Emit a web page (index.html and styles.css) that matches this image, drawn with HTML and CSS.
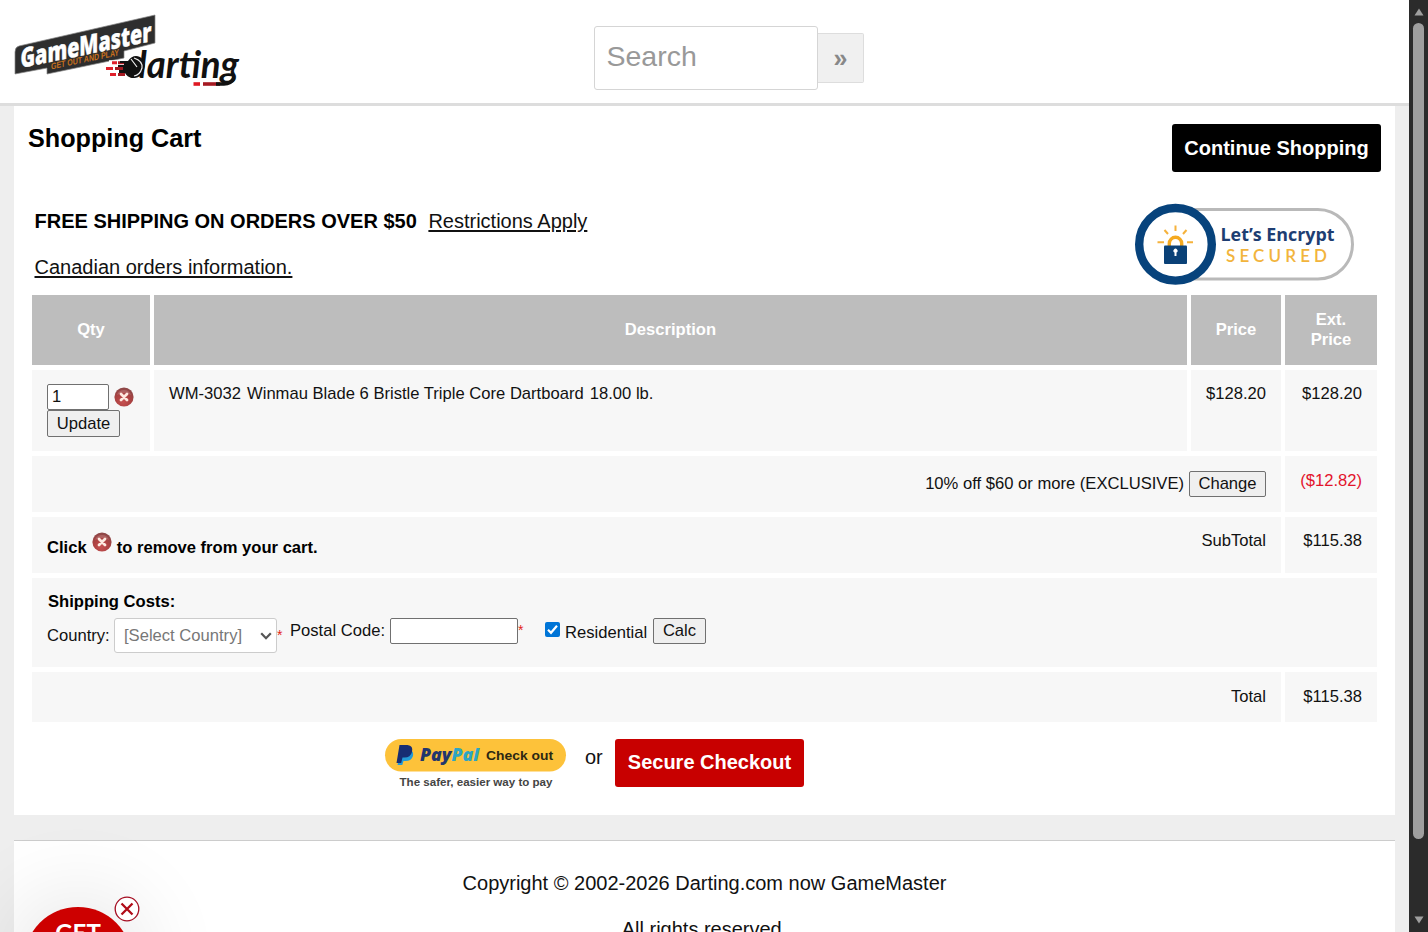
FILE: index.html
```html
<!DOCTYPE html>
<html lang="en">
<head>
<meta charset="utf-8">
<title>Shopping Cart</title>
<link rel="stylesheet" href="styles.css">
</head>
<body>
<svg class="defs" width="0" height="0" aria-hidden="true">
  <defs>
    <radialGradient id="ball" cx="45%" cy="75%" r="70%"><stop offset="0" stop-color="#c65050"/><stop offset=".6" stop-color="#ab4141"/><stop offset="1" stop-color="#8e4848"/></radialGradient>
    <symbol id="remove" viewBox="0 0 20 20">
      <circle cx="10" cy="10" r="9.6" fill="url(#ball)"/>
      <path d="M3 8a7.4 7.4 0 0 1 14 0Q10 4 3 8Z" fill="#fff" opacity=".16"/>
      <path d="M7 7l6 6M13 7l-6 6" stroke="#fde9e0" stroke-width="2.8" stroke-linecap="round"/>
    </symbol>
  </defs>
</svg>
<div class="page">
  <header class="header">
    <svg class="logo" width="232" height="80" viewBox="10 10 232 80">
      <path d="M15 52Q15 47 19 46L155 15V43L124 51V58L47 74V68L15 74Z" fill="#2e2e2e" stroke="#888" stroke-width=".7"/>
      <g transform="matrix(1 -.205 0 1 20.500 68)"><text class="logo-name" textLength="131" lengthAdjust="spacingAndGlyphs">GameMaster</text></g>
      <g transform="matrix(1 -.21 0 1 51 69.500)"><text class="logo-tag" textLength="68" lengthAdjust="spacingAndGlyphs">GET OUT AND PLAY</text></g>
      <path d="M109 62.800H128M106 68.600H128M110 74.400H128" stroke="#fff" stroke-width="5"/>
      <path d="M112 62.800H117M106 68.600H113M110 74.400H116" stroke="#e0202b" stroke-width="3"/>
      <path d="M118 62.800H125M115 68.600H123M118 74.400H125" stroke="#a51a22" stroke-width="3"/>
      <text class="logo-darting" x="127" y="77.500" textLength="112" lengthAdjust="spacingAndGlyphs">darting</text>
      <path d="M120 61H128Q133 54 140 57Q147 61 144 70Q141 79 132 78Q127 77 125 73H119V70H123V67H118V65H124V63H120Z" fill="#111"/>
      <path d="M134 58Q143 61 142 68Q140 75 134 76M137 67L131 59" fill="none" stroke="#eee" stroke-width="1.200"/>
      <path d="M193.500 84H200" stroke="#df1822" stroke-width="3.600"/>
      <path d="M203 84H220" stroke="#a51a22" stroke-width="3.600"/>
      <path d="M216 84H224Q231 84 234 78" fill="none" stroke="#111" stroke-width="3.600"/>
    </svg>
    <form class="search">
      <input class="search-input" type="text" placeholder="Search" aria-label="Search">
      <button class="search-go" type="button">»</button>
    </form>
  </header>

  <main class="cart">
    <div class="title-row">
      <h1 class="title">Shopping Cart</h1>
      <button class="btn btn-continue" type="button">Continue Shopping</button>
    </div>
    <div class="notice-row">
      <div class="notices">
        <p class="notice"><b>FREE SHIPPING ON ORDERS OVER $50</b> <a class="link link-restrict">Restrictions Apply</a></p>
        <p class="notice"><a class="link">Canadian orders information.</a></p>
      </div>
      <svg class="badge" width="222" height="84" viewBox="1133 202 222 84">
        <rect x="1150" y="209.500" width="202.500" height="69.500" rx="34.700" fill="#fff" stroke="#b9b9b9" stroke-width="3"/>
        <circle cx="1175.500" cy="244.300" r="36.300" fill="#fff" stroke="#07437c" stroke-width="8.400"/>
        <path d="M1175.500 225.500V231M1164.500 230L1168 234M1186.500 230L1183 234M1157.500 242.300H1164M1187 242.300H1193" stroke="#f5b23c" stroke-width="2"/>
        <path d="M1169.300 248V243.500a6.200 6.200 0 0 1 12.400 0V248" fill="none" stroke="#f5a91f" stroke-width="3.400"/>
        <rect x="1164" y="245.500" width="23" height="18.500" rx="1" fill="#0a4177"/>
        <path d="M1174.500 256V252.500a2 2 0 1 1 2 0V256Z" fill="#fff"/>
        <text class="badge-main" x="1220.500" y="241" textLength="114" lengthAdjust="spacingAndGlyphs">Let’s Encrypt</text>
        <text class="badge-sub" x="1226" y="261.500" textLength="101">SECURED</text>
      </svg>
    </div>

    <div class="grid">
      <div class="th">Qty</div><div class="th">Description</div><div class="th">Price</div><div class="th">Ext.<br>Price</div>

      <div class="cell qty">
        <div class="qty-line"><input class="field qty-input" value="1" aria-label="Quantity"><svg class="x-icon" width="20" height="20"><use href="#remove"/></svg></div>
        <button class="small-btn update" type="button">Update</button>
      </div>
      <div class="cell desc">WM-3032&nbsp;<span class="product">Winmau Blade 6 Bristle Triple Core Dartboard</span>&nbsp;<span class="weight">18.00 lb.</span></div>
      <div class="cell amount">$128.20</div>
      <div class="cell amount">$128.20</div>

      <div class="cell span3 promo"><span>10% off $60 or more (EXCLUSIVE)</span><button class="small-btn change" type="button">Change</button></div>
      <div class="cell amount discount">($12.82)</div>

      <div class="cell span3 subtotal">
        <b class="hint"><span>Click</span><svg class="x-icon x-hint" width="20" height="20"><use href="#remove"/></svg><span>to remove from your cart.</span></b>
        <span>SubTotal</span>
      </div>
      <div class="cell amount">$115.38</div>

      <div class="cell span4 shipping">
        <b class="ship-title">Shipping Costs:</b>
        <div class="ship-row">
          <span class="country-label">Country:</span>
          <span class="select"><span>[Select Country]</span><svg width="12" height="8" viewBox="0 0 12 8"><path d="M1.200 1.200L6 6.200L10.800 1.200" fill="none" stroke="#555" stroke-width="2.200"/></svg></span>
          <span class="star">*</span>
          <span class="postal-label">Postal Code:</span>
          <input class="field postal" aria-label="Postal code">
          <span class="star star-postal">*</span>
          <svg class="check" width="15" height="15" viewBox="0 0 15 15"><rect width="15" height="15" rx="2" fill="#0075d7"/><path d="M3 7.800L6 10.800L12 3.800" fill="none" stroke="#fff" stroke-width="2.200"/></svg>
          <span class="res-label">Residential</span>
          <button class="small-btn calc" type="button">Calc</button>
        </div>
      </div>

      <div class="cell span3 total">Total</div>
      <div class="cell total">$115.38</div>
    </div>

    <div class="checkout">
      <svg class="paypal" width="184" height="56" viewBox="384 737 184 56">
        <rect x="385" y="739" width="181" height="32.500" rx="16.250" fill="#fdc23a"/>
        <path d="M401.500 750H408Q414.500 750 412.800 756.500Q411 761 405.500 761H403.500L402.300 765H397.500Z" fill="#249bd7"/>
        <path d="M399.500 745H407.500Q413.500 745.500 412 752Q410.500 757.500 404.500 757.500H402.500L401.200 763H396.500Z" fill="#172d73"/>
        <text class="pp-word" x="420" y="761" textLength="59" lengthAdjust="spacingAndGlyphs"><tspan fill="#22366d">Pay</tspan><tspan fill="#2da5c4">Pal</tspan></text>
        <text class="pp-check" x="486" y="760" textLength="67" lengthAdjust="spacingAndGlyphs">Check out</text>
        <text class="pp-safe" x="399.500" y="785.500" textLength="153" lengthAdjust="spacingAndGlyphs">The safer, easier way to pay</text>
      </svg>
      <span class="or">or</span>
      <button class="btn btn-secure" type="button">Secure Checkout</button>
    </div>
  </main>

  <footer class="footer">
    <p class="foot-line">Copyright © 2002-2026 Darting.com now GameMaster</p>
    <p class="foot-line">All rights reserved.</p>
  </footer>
  <div class="promo-bubble">GET</div>
  <svg class="promo-close" width="26" height="26" viewBox="0 0 26 26"><circle cx="13" cy="13" r="11.800" fill="#fff" stroke="#a50e22" stroke-width="1.300"/><path d="M7.500 7.500L18.500 18.500M18.500 7.500L7.500 18.500" stroke="#b00c18" stroke-width="2.300"/></svg>
</div>
<aside class="scrollbar">
  <svg width="10" height="8" viewBox="0 0 10 8"><path d="M5 .5L9.500 7.500H.5Z" fill="#9f9f9f"/></svg>
  <div class="thumb"></div>
  <svg class="arrow-down" width="10" height="8" viewBox="0 0 10 8"><path d="M5 7.500L9.500 .5H.5Z" fill="#9f9f9f"/></svg>
</aside>
</body>
</html>
```
FILE: styles.css
```css
* { box-sizing: border-box; }
html, body { height: 100%; overflow: hidden; }
body { margin: 0; display: flex; font: 16.6px/20px "Liberation Sans", Arial, sans-serif; color: #111; }
input, button { font: inherit; color: inherit; margin: 0; }
svg { display: block; flex: none; }
.defs { position: absolute; }
.page { position: relative; width: 1409px; height: 932px; overflow: hidden; background: #eee; }

.header { height: 106px; background: #fff; border-bottom: 3px solid #ddd; display: flex; }
.logo { margin: 10px 0 0 10px; overflow: visible; }
.logo-name { font: 800 27px "Open Sans", sans-serif; fill: #fff; stroke: #fff; stroke-width: .4px; }
.logo-tag { font: bold 9px "Liberation Sans", sans-serif; fill: #c8701c; }
.logo-darting { font: italic bold 38px Lato, sans-serif; fill: #111; }
.search { display: flex; align-items: flex-start; margin: 26px 0 0 352px; }
.search-input { width: 224px; height: 64px; border: 1px solid #d5d5d5; border-radius: 3px; padding: 0 12px 3px 11.500px; font-size: 28.500px; background: #fff; }
.search-input::placeholder { color: #999; opacity: 1; }
.search-go { width: 46px; height: 50px; margin-top: 7px; padding: 0; border: 1px solid #ddd; border-left: 0; border-radius: 0 2px 2px 0; background: #f0f0f0; color: #888; font-weight: bold; font-size: 25px; }

.cart { height: 709px; margin: 0 14px; padding: 18px 14px 0; background: #fff; }
.title-row { display: flex; justify-content: space-between; height: 79px; }
.title { margin: 0; font-size: 25.200px; line-height: 29px; color: #000; }
.btn { border: 0; border-radius: 3px; height: 48px; padding: 0; color: #fff; font-weight: bold; font-size: 20px; }
.btn-continue { width: 209px; background: #000; }
.notice-row { display: flex; justify-content: space-between; height: 92px; }
.notices { padding: 6px 0 0 6.500px; font-size: 20px; }
.notice { margin: 0 0 22px; line-height: 24px; }
.notice b { color: #000; }
.link { text-decoration: underline; text-decoration-thickness: 1.500px; text-underline-offset: 2px; }
.link-restrict { margin-left: 6px; }
.badge { margin: -1px 26px 0 0; }
.badge-main { font: bold 18px "Open Sans", sans-serif; fill: #1e3e72; }
.badge-sub { font: 600 17px Lato, sans-serif; fill: #f2b43c; }

.grid { display: grid; grid-template-columns: 118px 1033px 90px 92px; grid-template-rows: 70px 81px 56px 56px 89px 50px; gap: 5px 4px; margin-left: 4px; }
.th { display: flex; align-items: center; justify-content: center; text-align: center; background: #bdbdbd; color: #fff; font-weight: bold; }
.cell { background: #f7f7f7; padding: 14px 15px; }
.span3 { grid-column: span 3; }
.span4 { grid-column: span 4; }
.desc { white-space: nowrap; }
.product, .weight { margin-left: 1.500px; }
.amount { text-align: right; }
.discount { padding-top: 15px; color: #e3142c; }
.field { border: 1px solid #707070; border-radius: 2px; background: #fff; padding: 0 4px; height: 26px; }
.qty-line { display: flex; align-items: center; gap: 5px; }
.qty-input { width: 62px; }
.small-btn { border: 1px solid #707070; border-radius: 2px; background: #efefef; height: 26px; padding: 0; }
.update { width: 73px; height: 27px; display: block; }
.promo { display: flex; justify-content: flex-end; align-items: center; gap: 5px; padding: 0 15px; }
.change { width: 77px; }
.subtotal { display: flex; justify-content: space-between; }
.hint { display: flex; gap: 5px; padding-top: 7px; color: #000; }
.x-hint { margin-top: -6px; }
.shipping { padding: 14px 16px; }
.ship-title { color: #000; }
.ship-row { display: flex; align-items: flex-start; margin: 6px 0 0 -1px; white-space: nowrap; }
.country-label { padding-top: 8px; width: 67px; }
.select { display: flex; align-items: center; justify-content: space-between; width: 163px; height: 35px; padding: 0 4px 0 9px; border: 1px solid #ccc; border-radius: 3px; background: #fff; color: #777; }
.star { width: 13px; padding-top: 7px; font-size: 14px; color: #e32417; }
.postal-label { width: 100px; padding-top: 3px; }
.postal { width: 128px; }
.star-postal { width: 27px; padding-top: 2px; }
.check { margin-top: 4px; }
.res-label { margin: 5px 0 0 5px; width: 88px; }
.calc { width: 53px; }
.total { padding-top: 15px; text-align: right; }

.checkout { display: flex; align-items: flex-start; margin: 15px 0 0 356px; }
.pp-word { font: italic 800 18px "Open Sans", sans-serif; }
.pp-check { font: bold 13.500px "Liberation Sans", sans-serif; fill: #2c2813; }
.pp-safe { font: bold 11px "Liberation Sans", sans-serif; fill: #444; }
.or { margin: 10px 0 0 17px; width: 30px; font-size: 20px; }
.btn-secure { width: 189px; margin-top: 2px; padding-bottom: 2px; background: #c80000; }

.footer { height: 120px; margin: 25px 14px 0; border-top: 1px solid #ccc; background: #fff; text-align: center; padding-top: 30px; }
.foot-line { margin: 0 0 22px; font-size: 20px; line-height: 24px; }
.promo-bubble { position: absolute; left: 24px; top: 907px; width: 108px; height: 108px; border-radius: 50%; background: #cd0000; color: #fff; font: bold 24px/24px Lato, sans-serif; text-align: center; padding-top: 14px; box-shadow: 0 0 90px 10px rgba(0,0,0,.11); }
.promo-close { position: absolute; left: 114px; top: 896px; }

.scrollbar { width: 19px; height: 932px; background: #2b2b2b; display: flex; flex-direction: column; align-items: center; padding-top: 8px; }
.thumb { width: 11px; height: 816px; margin-top: 7px; border-radius: 6px; background: #9f9f9f; }
.arrow-down { margin-top: 77px; }
```
